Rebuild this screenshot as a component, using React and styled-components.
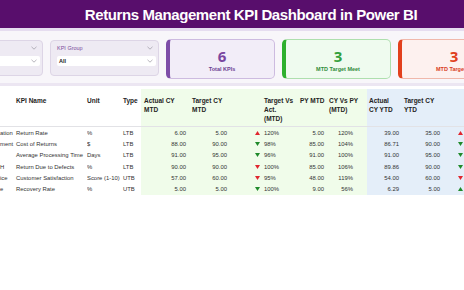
import styled, { createGlobalStyle } from "styled-components";

const GlobalStyle = createGlobalStyle`
    body {
        margin: 0;
        background: #ffffff;
        font-family: "Liberation Sans", Arial, sans-serif;
    }
`;

const Page = styled.div`
    width: 464px;
    height: 290px;
    overflow: hidden;
    background: #ffffff;
`;

const Header = styled.header`
    height: 28px;
    background: #580e6c;
    border-bottom: 3px solid #e6ddf0;
    display: flex;
    align-items: center;
    justify-content: center;
    padding-left: 38px;
`;

const Title = styled.h1`
    margin: 0;
    color: #ffffff;
    font-size: 15px;
    font-weight: 700;
    letter-spacing: -0.4px;
    white-space: nowrap;
`;

const Panel = styled.section`
    height: 55px;
    box-sizing: border-box;
    background: #f8f6fa;
    border-bottom: 3px solid #ece6f2;
    display: flex;
    align-items: flex-start;
    gap: 7px;
    padding-top: 8px;
    overflow: hidden;
`;

const Slicer = styled.div`
    flex: 0 0 109px;
    height: 36px;
    box-sizing: border-box;
    margin-top: 1px;
    margin-left: ${(p) => p.$offset || 0}px;
    background: #eeeaf3;
    border: 1px solid #ddd5e6;
    border-radius: 4px;
    display: flex;
    flex-direction: column;
    padding: 3px 2px 0 6px;
`;

const SlicerHead = styled.div`
    display: flex;
    justify-content: space-between;
    align-items: center;
    height: 8px;
    padding-right: 3px;
    color: #7a4a9c;
    font-size: 5.5px;
`;

const Dropdown = styled.div`
    margin-top: 4px;
    height: 10px;
    background: #ffffff;
    border-radius: 2px;
    display: flex;
    align-items: center;
    justify-content: space-between;
    padding: 0 3px 0 2px;
    font-size: 5.5px;
    font-weight: 700;
    color: #222;
`;

const tones = {
    purple: { bg: "#f2edf8", border: "#cdbbe0", bar: "#7e4da8", ink: "#7a46a0", label: "#6c3d92" },
    green: { bg: "#effbef", border: "#aedfae", bar: "#2eb02e", ink: "#33a03c", label: "#2f8c3a" },
    red: { bg: "#fdf1ef", border: "#f0b8ab", bar: "#e2401d", ink: "#e0401d", label: "#d83a1c" },
};

const Card = styled.div`
    flex: 0 0 109px;
    height: 40px;
    box-sizing: border-box;
    background: ${(p) => tones[p.$tone].bg};
    border: 1px solid ${(p) => tones[p.$tone].border};
    border-left: 4px solid ${(p) => tones[p.$tone].bar};
    border-radius: 5px;
    display: flex;
    flex-direction: column;
    align-items: center;
    justify-content: center;
    padding-top: 2px;
`;

const CardValue = styled.div`
    font-family: "Open Sans", sans-serif;
    font-size: 15px;
    font-weight: 700;
    line-height: 16px;
    color: ${(p) => tones[p.$tone].ink};
`;

const CardLabel = styled.div`
    font-size: 5.5px;
    font-weight: 700;
    margin-top: 2px;
    color: ${(p) => tones[p.$tone].label};
    white-space: nowrap;
`;

const zoneBg = { green: "#f0fcea", blue: "#e4eef9" };

const Table = styled.div`
    margin-top: 3px;
    display: grid;
    grid-template-columns: 14px 73px 34px 20px 48px 40px 33px 34px 31px 40px 34px 43px 28px;
`;

const HeadCell = styled.div`
    background: ${(p) => (p.$zone ? zoneBg[p.$zone] : "#ffffff")};
    border-bottom: 1px solid #e2e2e6;
    padding: 7px 0 3px ${(p) => p.$pl || 0}px;
    font-size: 6.5px;
    font-weight: 700;
    line-height: 9px;
    color: #252423;
    white-space: nowrap;
`;

const Cell = styled.div`
    height: 11.3px;
    display: flex;
    align-items: center;
    justify-content: ${(p) => (p.$right ? "flex-end" : "flex-start")};
    background: ${(p) => (p.$zone ? zoneBg[p.$zone] : "#ffffff")};
    padding: 0 ${(p) => p.$pr || 0}px 0 ${(p) => p.$pl || 0}px;
    font-size: 5.9px;
    color: #333333;
    white-space: nowrap;
    overflow: hidden;
`;

const arrowColors = { red: "#e0262f", green: "#1f8a2a" };

function Arrow({ dir, color }) {
    const pts = dir === "up" ? "0,4 2.5,0 5,4" : "0,0 5,0 2.5,4";
    return (
        <svg width="5" height="4" viewBox="0 0 5 4">
            <polygon points={pts} fill={arrowColors[color]} />
        </svg>
    );
}

function Chevron() {
    return (
        <svg width="6" height="4" viewBox="0 0 6 4">
            <polyline points="0.5,0.8 3,3.2 5.5,0.8" fill="none" stroke="#9a96a0" strokeWidth="0.7" />
        </svg>
    );
}

const cols = [
    { key: "grp", label: [""], pl: 0 },
    { key: "name", label: ["KPI Name"], pl: 2 },
    { key: "unit", label: ["Unit"], pl: 0 },
    { key: "type", label: ["Type"], pl: 2 },
    { key: "acy", label: ["Actual CY", "MTD"], zone: "green", right: true, pl: 3, pr: 3 },
    { key: "tcy", label: ["Target CY", "MTD"], zone: "green", right: true, pl: 3, pr: 2 },
    { key: "a1", label: [""], zone: "green", arrow: true, right: true, pr: 2 },
    { key: "tva", label: ["Target Vs", "Act.", "(MTD)"], zone: "green", pl: 2 },
    { key: "py", label: ["PY MTD"], zone: "green", right: true, pl: 4, pr: 3 },
    { key: "cvp", label: ["CY Vs PY", "(MTD)"], zone: "green", right: true, pl: 2, pr: 14 },
    { key: "aytd", label: ["Actual", "CY YTD"], zone: "blue", right: true, pl: 2, pr: 2 },
    { key: "tytd", label: ["Target CY", "YTD"], zone: "blue", right: true, pl: 3, pr: 4 },
    { key: "a2", label: [""], zone: "blue", arrow: true, pl: 14 },
];

const rows = [
    { grp: "ation", name: "Return Rate", unit: "%", type: "LTB", acy: "6.00", tcy: "5.00", a1: ["up", "red"], tva: "120%", py: "5.00", cvp: "120%", aytd: "39.00", tytd: "35.00", a2: ["up", "red"] },
    { grp: "ment", name: "Cost of Returns", unit: "$", type: "LTB", acy: "88.00", tcy: "90.00", a1: ["down", "green"], tva: "98%", py: "85.00", cvp: "104%", aytd: "86.71", tytd: "90.00", a2: ["down", "green"] },
    { grp: "", name: "Average Processing Time", unit: "Days", type: "LTB", acy: "91.00", tcy: "95.00", a1: ["down", "green"], tva: "96%", py: "91.00", cvp: "100%", aytd: "91.00", tytd: "95.00", a2: ["down", "green"] },
    { grp: "H", name: "Return Due to Defects", unit: "%", type: "LTB", acy: "90.00", tcy: "90.00", a1: ["down", "red"], tva: "100%", py: "85.00", cvp: "106%", aytd: "89.86", tytd: "90.00", a2: ["down", "green"] },
    { grp: "ice", name: "Customer Satisfaction", unit: "Score (1-10)", type: "UTB", acy: "57.00", tcy: "60.00", a1: ["down", "red"], tva: "95%", py: "48.00", cvp: "119%", aytd: "54.00", tytd: "60.00", a2: ["down", "red"] },
    { grp: "e", name: "Recovery Rate", unit: "%", type: "UTB", acy: "5.00", tcy: "5.00", a1: ["down", "green"], tva: "100%", py: "9.00", cvp: "56%", aytd: "6.29", tytd: "5.00", a2: ["up", "green"] },
];

const cards = [
    { tone: "purple", value: 6, label: "Total KPIs" },
    { tone: "green", value: 3, label: "MTD Target Meet" },
    { tone: "red", value: 3, label: "MTD Target M" },
];

export default function App() {
    return (
        <Page>
            <GlobalStyle />
            <Header>
                <Title>Returns Management KPI Dashboard in Power BI</Title>
            </Header>
            <Panel>
                <Slicer $offset={-66}>
                    <SlicerHead>
                        <span />
                        <Chevron />
                    </SlicerHead>
                    <Dropdown>
                        <span />
                        <Chevron />
                    </Dropdown>
                </Slicer>
                <Slicer>
                    <SlicerHead>
                        <span>KPI Group</span>
                        <Chevron />
                    </SlicerHead>
                    <Dropdown>
                        <span>All</span>
                        <Chevron />
                    </Dropdown>
                </Slicer>
                {cards.map((c) => (
                    <Card key={c.label} $tone={c.tone}>
                        <CardValue $tone={c.tone}>{c.value}</CardValue>
                        <CardLabel $tone={c.tone}>{c.label}</CardLabel>
                    </Card>
                ))}
            </Panel>
            <Table>
                {cols.map((c) => (
                    <HeadCell key={c.key} $zone={c.zone} $pl={c.pl}>
                        {c.label.map((line, i) => (
                            <div key={i}>{line || "\u00a0"}</div>
                        ))}
                    </HeadCell>
                ))}
                {rows.map((r, ri) =>
                    cols.map((c) => (
                        <Cell
                            key={ri + c.key}
                            $zone={c.zone}
                            $right={c.right}
                            $pl={c.pl}
                            $pr={c.pr}
                        >
                            {c.arrow ? <Arrow dir={r[c.key][0]} color={r[c.key][1]} /> : r[c.key]}
                        </Cell>
                    ))
                )}
            </Table>
        </Page>
    );
}
